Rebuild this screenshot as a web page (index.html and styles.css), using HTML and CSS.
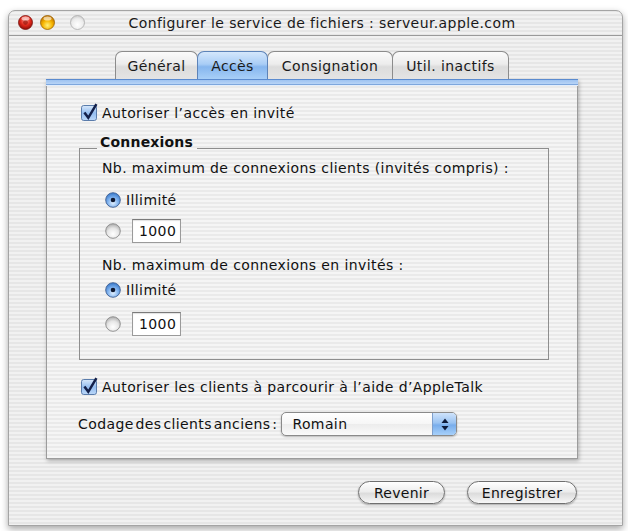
FILE: index.html
```html
<!DOCTYPE html>
<html lang="fr">
<head>
<meta charset="utf-8">
<title>Configurer le service de fichiers</title>
<link rel="stylesheet" href="styles.css">
</head>
<body>
<div class="window stripes">
  <div class="titlebar">
    <div class="lights">
      <svg class="light" width="15" height="15" viewBox="0 0 15 15">
        <defs><radialGradient id="gr" cx="50%" cy="35%" r="65%"><stop offset="0" stop-color="#ff9a8c"/><stop offset="0.55" stop-color="#e0281c"/><stop offset="1" stop-color="#8a0c06"/></radialGradient></defs>
        <circle cx="7.5" cy="7.5" r="7" fill="url(#gr)" stroke="#7a1410" stroke-width="0.8"/>
        <circle cx="7.5" cy="7.5" r="2.4" fill="#9a1208" opacity="0.7"/>
        <ellipse cx="7.5" cy="3.6" rx="4" ry="2" fill="#fff" opacity="0.55"/>
      </svg>
      <svg class="light light-y" width="15" height="15" viewBox="0 0 15 15">
        <defs><radialGradient id="gy" cx="50%" cy="70%" r="70%"><stop offset="0" stop-color="#fff07a"/><stop offset="0.5" stop-color="#f6b400"/><stop offset="1" stop-color="#b86a00"/></radialGradient></defs>
        <circle cx="7.5" cy="7.5" r="7" fill="url(#gy)" stroke="#9a6200" stroke-width="0.8"/>
        <ellipse cx="7.5" cy="3.6" rx="4" ry="2" fill="#fff" opacity="0.6"/>
      </svg>
      <svg class="light light-g" width="15" height="15" viewBox="0 0 15 15">
        <defs><radialGradient id="gg" cx="50%" cy="65%" r="70%"><stop offset="0" stop-color="#ffffff"/><stop offset="0.6" stop-color="#ececec"/><stop offset="1" stop-color="#c4c4c4"/></radialGradient></defs>
        <circle cx="7.5" cy="7.5" r="7" fill="url(#gg)" stroke="#ababab" stroke-width="0.8"/>
      </svg>
    </div>
    <div class="title">Configurer le service de fichiers : serveur.apple.com</div>
  </div>

  <div class="content">
    <div class="tabs">
      <div class="tab tab-general">Général</div>
      <div class="tab tab-acces active">Accès</div>
      <div class="tab tab-consig">Consignation</div>
      <div class="tab tab-util">Util. inactifs</div>
    </div>

    <div class="pane stripes-light">
      <div class="band"></div>
      <div class="pane-body">
        <div class="check cb1">
          <svg class="cbox" width="18" height="18" viewBox="0 0 18 18">
            <defs><linearGradient id="cbg" x1="0" y1="0" x2="0" y2="1"><stop offset="0" stop-color="#d9e9fb"/><stop offset="0.5" stop-color="#94bdf0"/><stop offset="1" stop-color="#bcd8f8"/></linearGradient></defs>
            <rect x="0.5" y="2.5" width="15" height="15" rx="2.2" fill="url(#cbg)" stroke="#5a7cab"/>
            <path d="M3.4 9.4 L7.3 14.8 L15.4 1.2" fill="none" stroke="#13204a" stroke-width="2.5" stroke-linejoin="miter"/>
          </svg>
          <span>Autoriser l’accès en invité</span>
        </div>

        <fieldset class="group">
          <legend>Connexions</legend>
          <div class="caption cap1">Nb. maximum de connexions clients (invités compris) :</div>
          <div class="radio r1">
            <svg class="rad" width="16" height="16" viewBox="0 0 16 16">
              <defs><radialGradient id="rb" cx="50%" cy="70%" r="65%"><stop offset="0" stop-color="#e2f0ff"/><stop offset="0.55" stop-color="#7fb2ee"/><stop offset="1" stop-color="#3f7fcf"/></radialGradient></defs>
              <circle cx="8" cy="8" r="7.3" fill="url(#rb)" stroke="#3e5f92" stroke-width="0.9"/>
              <circle cx="8" cy="8" r="2.3" fill="#0e1830"/>
            </svg>
            <span>Illimité</span>
          </div>
          <div class="radio r2">
            <svg class="rad" width="16" height="16" viewBox="0 0 16 16">
              <defs><radialGradient id="rg" cx="50%" cy="70%" r="65%"><stop offset="0" stop-color="#ffffff"/><stop offset="0.6" stop-color="#e6e6e6"/><stop offset="1" stop-color="#b4b4b4"/></radialGradient></defs>
              <circle cx="8" cy="8" r="7.3" fill="url(#rg)" stroke="#8a8a8a" stroke-width="0.9"/>
            </svg>
            <span class="field">1000</span>
          </div>
          <div class="caption cap2">Nb. maximum de connexions en invités :</div>
          <div class="radio r3">
            <svg class="rad" width="16" height="16" viewBox="0 0 16 16">
              <circle cx="8" cy="8" r="7.3" fill="url(#rb)" stroke="#3e5f92" stroke-width="0.9"/>
              <circle cx="8" cy="8" r="2.3" fill="#0e1830"/>
            </svg>
            <span>Illimité</span>
          </div>
          <div class="radio r4">
            <svg class="rad" width="16" height="16" viewBox="0 0 16 16">
              <circle cx="8" cy="8" r="7.3" fill="url(#rg)" stroke="#8a8a8a" stroke-width="0.9"/>
            </svg>
            <span class="field">1000</span>
          </div>
        </fieldset>

        <div class="check cb2">
          <svg class="cbox" width="18" height="18" viewBox="0 0 18 18">
            <rect x="0.5" y="2.5" width="15" height="15" rx="2.2" fill="url(#cbg)" stroke="#5a7cab"/>
            <path d="M3.4 9.4 L7.3 14.8 L15.4 1.2" fill="none" stroke="#13204a" stroke-width="2.5"/>
          </svg>
          <span>Autoriser les clients à parcourir à l’aide d’AppleTalk</span>
        </div>

        <div class="popup-row">
          <span class="popup-label">Codage des clients anciens :</span>
          <div class="popup">
            <span class="popup-value">Romain</span>
            <span class="popup-arrows">
              <svg width="8" height="13" viewBox="0 0 8 13">
                <path d="M4 0.5 L7.5 5 L0.5 5 Z" fill="#0d1a3a"/>
                <path d="M4 12.5 L7.5 8 L0.5 8 Z" fill="#0d1a3a"/>
              </svg>
            </span>
          </div>
        </div>
      </div>
    </div>

    <div class="buttons">
      <button class="btn btn-revenir">Revenir</button>
      <button class="btn btn-save">Enregistrer</button>
    </div>
  </div>
</div>
</body>
</html>
```

FILE: styles.css
```css
* { box-sizing: border-box; }
html, body { margin: 0; padding: 0; }
body {
  width: 628px;
  height: 531px;
  overflow: hidden;
  background: #ffffff;
  font-family: "DejaVu Sans", "Liberation Sans", sans-serif;
  font-size: 14px;
  letter-spacing: 0.4px;
  color: #111;
}

.stripes {
  background: repeating-linear-gradient(to bottom, #f1f1f1 0 2px, #e6e6e6 2px 4px);
  background-attachment: fixed;
}
.stripes-light {
  background: repeating-linear-gradient(to bottom, #f5f5f5 0 2px, #eaeaea 2px 4px);
  background-attachment: fixed;
}

.window {
  margin: 10px 0 0 8px;
  width: 615px;
  height: 516px;
  border: 1px solid #a4a4a4;
  border-radius: 7px 7px 0 0;
  box-shadow: 0 3px 7px rgba(0,0,0,0.35);
  display: flex;
  flex-direction: column;
}

.titlebar {
  height: 25px;
  border-bottom: 1px solid #9a9a9a;
  display: grid;
  align-items: center;
}
.titlebar > * { grid-area: 1 / 1; }
.lights {
  display: flex;
  align-items: center;
  margin-left: 9px;
  margin-top: -2px;
}
.light { display: block; }
.light-y { margin-left: 7px; }
.light-g { margin-left: 15px; }
.title {
  justify-self: center;
  padding-left: 13px;
  font-size: 14px;
  color: #1a1a1a;
  margin-top: -1px;
}

.content {
  padding: 15px 0 0 37px;
}

.tabs {
  width: 532px;
  height: 28px;
  display: flex;
  justify-content: center;
}
.tab {
  height: 28px;
  border: 1px solid #8c8c8c;
  border-bottom: none;
  border-radius: 7px 7px 0 0;
  background: linear-gradient(to bottom, #fbfbfb 0%, #ececec 45%, #dcdcdc 55%, #e4e4e4 100%);
  display: flex;
  align-items: center;
  justify-content: center;
  color: #1a1a1a;
  padding-top: 1px;
}
.tab + .tab { margin-left: -1px; }
.tab.active {
  background: linear-gradient(to bottom, #d4e7fc 0%, #a9cdf6 45%, #86b6ee 55%, #a8cff8 100%);
  border-color: #5d83b8;
  position: relative;
  z-index: 1;
}
.tab-general { width: 83px; }
.tab-acces { width: 71px; }
.tab-consig { width: 126px; }
.tab-util { width: 117px; }

.pane {
  width: 532px;
  border: 1px solid #9c9c9c;
  border-top: none;
  box-shadow: 1px 2px 4px rgba(0,0,0,0.28);
}
.band {
  height: 7px;
  margin: 0 -1px;
  background: linear-gradient(to bottom, #5b8bcf 0 1px, #9ec3f1 1px, #b8d4f6 5px, #7ea7dd 5px 6px, #e4eefb 6px 7px);
}
.pane-body {
  padding: 17px 0 22px 32px;
}

.check {
  height: 20px;
  display: flex;
  align-items: center;
  gap: 3px;
  margin-left: 2px;
}
.cbox { display: block; margin-top: -2px; }

.group {
  margin: 12px 0 0 0;
  width: 470px;
  border: 1px solid #8e8e8e;
  padding: 0 0 23px 22px;
}
.group legend {
  font-weight: bold;
  font-size: 14px;
  line-height: 14px;
  letter-spacing: 0.2px;
  padding: 0 4px 12px 3px;
  margin-left: -5px;
  color: #111;
}

.caption {
  height: 14px;
  line-height: 14px;
  white-space: nowrap;
}
.cap2 { margin-top: 14px; height: 16px; line-height: 16px; }

.radio {
  display: flex;
  align-items: center;
  margin-left: 3px;
  gap: 5px;
}
.rad { display: block; }
.r1 { margin-top: 15px; height: 20px; }
.r2 { margin-top: 9px; height: 24px; }
.r3 { margin-top: 7px; height: 20px; }
.r4 { margin-top: 12px; height: 24px; }
.field {
  margin-left: 6px;
  width: 49px;
  height: 24px;
  border: 1px solid #9a9a9a;
  border-top-color: #7a7a7a;
  background: #ffffff;
  padding-left: 6px;
  display: flex;
  align-items: center;
  box-shadow: inset 0 1px 1px rgba(0,0,0,0.12);
}

.cb2 { margin-top: 17px; }

.popup-row {
  margin-top: 15px;
  margin-left: -1px;
  height: 24px;
  display: flex;
  align-items: center;
  gap: 4px;
}
.popup-label {
  word-spacing: -3px;
  white-space: nowrap;
}
.popup {
  width: 176px;
  height: 24px;
  border: 1px solid #8a8a8a;
  border-radius: 5px;
  background: linear-gradient(to bottom, #ffffff 0%, #f6f6f6 50%, #ececec 51%, #fafafa 100%);
  display: flex;
  align-items: center;
  box-shadow: 0 1px 2px rgba(0,0,0,0.25);
}
.popup-value {
  flex: 1;
  padding-left: 10px;
}
.popup-arrows {
  width: 24px;
  height: 22px;
  border-radius: 0 4px 4px 0;
  border-left: 1px solid #7e9fcc;
  background: linear-gradient(to bottom, #cfe3fb 0%, #9ac3f2 45%, #78adec 55%, #a7d0fa 100%);
  display: flex;
  align-items: center;
  justify-content: center;
}
.popup-arrows svg { display: block; }

.buttons {
  width: 532px;
  margin-top: 22px;
  display: flex;
  justify-content: flex-end;
  gap: 22px;
  padding-right: 1px;
}
.btn {
  height: 23px;
  border: 1px solid #6f6f6f;
  border-radius: 12px;
  background: linear-gradient(to bottom, #ffffff 0%, #ededed 45%, #dcdcdc 55%, #f7f7f7 100%);
  box-shadow: 0 1px 2px rgba(0,0,0,0.3);
  font-family: "DejaVu Sans", "Liberation Sans", sans-serif;
  font-size: 14px;
  letter-spacing: 0.3px;
  color: #111;
  padding: 0;
  display: flex;
  align-items: center;
  justify-content: center;
}
.btn-revenir { width: 87px; }
.btn-save { width: 110px; }
```
